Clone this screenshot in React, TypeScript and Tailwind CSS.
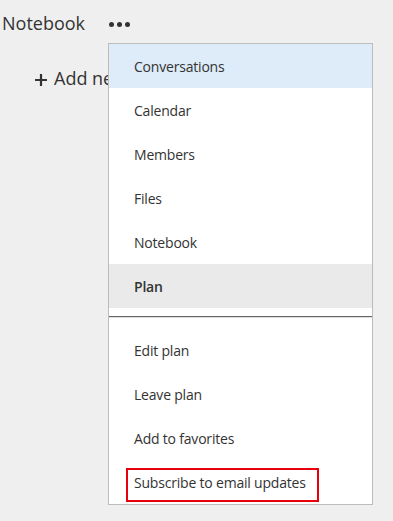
import React from "react";

const items1 = ["Conversations", "Calendar", "Members", "Files", "Notebook", "Plan"];
const items2 = ["Edit plan", "Leave plan", "Add to favorites"];

export default function App() {
  return (
    <div
      className="relative h-[521px] w-[393px] overflow-hidden bg-[#efefef] text-[#333333]"
      style={{ fontFamily: '"Open Sans", "Noto Sans", sans-serif' }}
    >
      <div className="flex h-[46px] items-center pl-[2px]">
        <span className="text-[18px] leading-none">Notebook</span>
        <div className="ml-[24px] flex items-center gap-[3px] pt-[3px]">
          <span className="h-[5px] w-[5px] rounded-full bg-[#333]" />
          <span className="h-[5px] w-[5px] rounded-full bg-[#333]" />
          <span className="h-[5px] w-[5px] rounded-full bg-[#333]" />
        </div>
      </div>
      <div className="flex h-[64px] items-center pl-[34px]">
        <svg width="14" height="14" viewBox="0 0 14 14" className="mt-[3px]">
          <path d="M7 1v12M1 7h12" stroke="#333" strokeWidth="2.2" />
        </svg>
        <span className="ml-[6px] text-[18px] leading-none">Add new</span>
      </div>

      <div className="absolute left-[108px] top-[43px] w-[265px] border border-[#bcbcbc] bg-white tracking-[-0.2px]">
        {items1.map((t, i) => (
          <div
            key={t}
            className={
              "flex h-[44px] items-center pl-[25px] pt-[1px] text-[14px] " +
              (i === 0 ? "bg-[#deebf8] " : "") +
              (t === "Plan" ? "bg-[#eaeaea] font-semibold" : "")
            }
          >
            {t}
          </div>
        ))}
        <div className="h-[8px]" />
        <div className="h-[1px] bg-[#666666]" />
        <div className="h-[1px] bg-[#dddddd]" />
        <div className="h-[10px]" />
        {items2.map((t) => (
          <div key={t} className="flex h-[44px] items-center pl-[25px] pt-[1px] text-[14px]">
            {t}
          </div>
        ))}
        <div className="relative flex h-[44px] items-center pl-[25px] pt-[1px] text-[14px]">
          Subscribe to email updates
          <div className="absolute left-[17px] top-[8px] h-[34px] w-[193px] border-2 border-[#e8000b]" />
        </div>
      </div>
    </div>
  );
}
